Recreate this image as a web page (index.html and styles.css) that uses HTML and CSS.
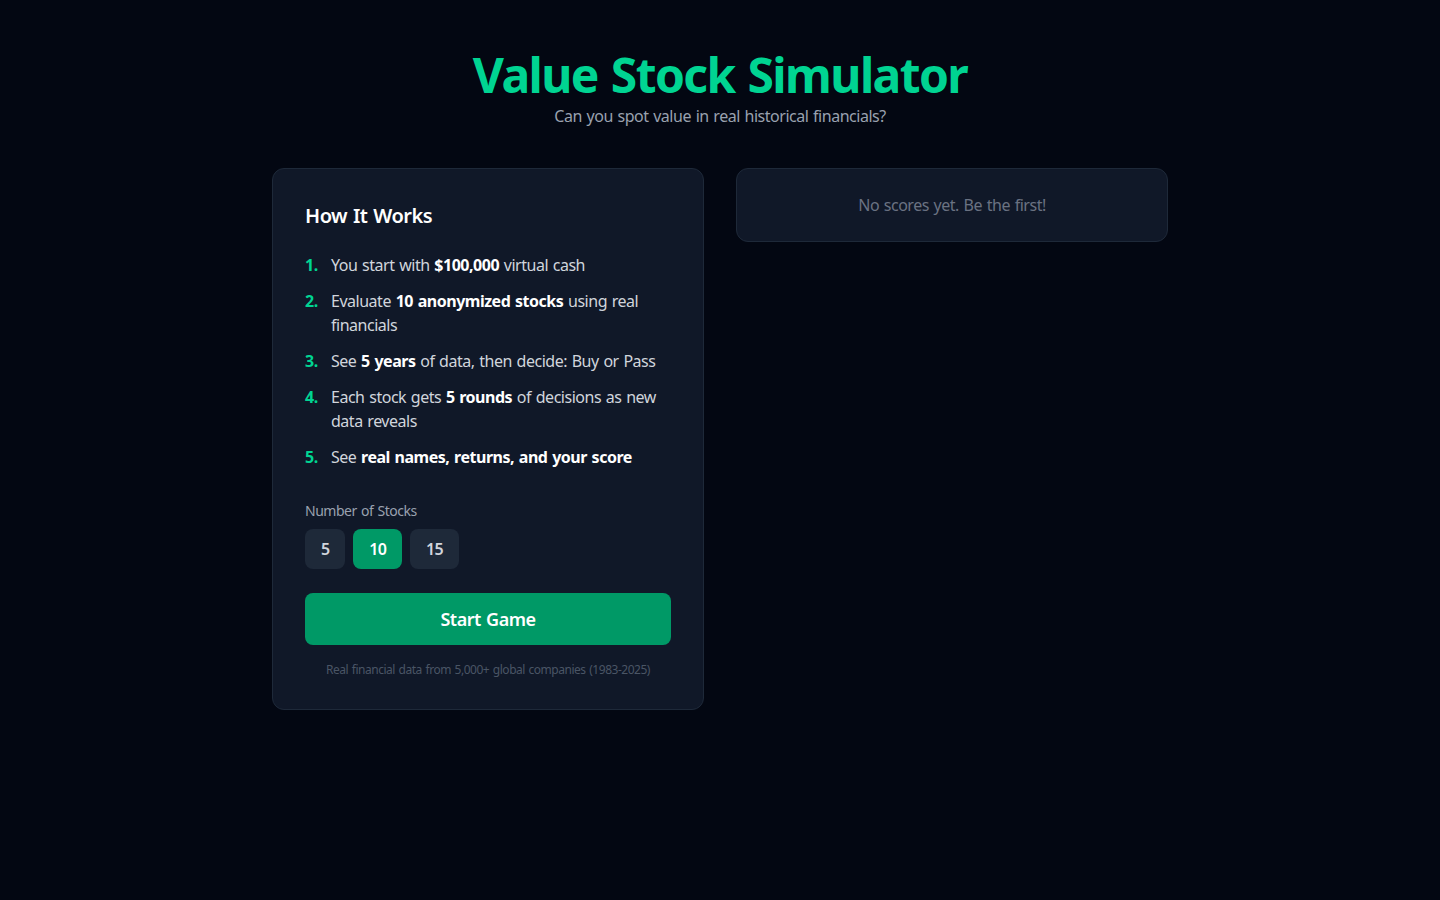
FILE: index.html
```html
<!DOCTYPE html>
<html lang="en">
<head>
<meta charset="utf-8">
<title>Value Stock Simulator</title>
<link rel="stylesheet" href="styles.css">
</head>
<body>
<main class="page">
  <header class="hero">
    <h1 class="title">Value Stock Simulator</h1>
    <p class="subtitle">Can you spot value in real historical financials?</p>
  </header>
  <div class="grid">
    <section class="card card-main">
      <h2 class="card-title">How It Works</h2>
      <ol class="steps">
        <li class="step"><span class="num">1.</span><span class="step-text">You start with <strong>$100,000</strong> virtual cash</span></li>
        <li class="step"><span class="num">2.</span><span class="step-text">Evaluate <strong>10 anonymized stocks</strong> using real financials</span></li>
        <li class="step"><span class="num">3.</span><span class="step-text">See <strong>5 years</strong> of data, then decide: Buy or Pass</span></li>
        <li class="step"><span class="num">4.</span><span class="step-text">Each stock gets <strong>5 rounds</strong> of decisions as new data reveals</span></li>
        <li class="step"><span class="num">5.</span><span class="step-text">See <strong>real names, returns, and your score</strong></span></li>
      </ol>
      <div class="field">
        <div class="label">Number of Stocks</div>
        <div class="options">
          <button class="opt">5</button>
          <button class="opt opt-active">10</button>
          <button class="opt">15</button>
        </div>
      </div>
      <button class="start">Start Game</button>
      <p class="note">Real financial data from 5,000+ global companies (1983-2025)</p>
    </section>
    <section class="card card-side">
      <p class="empty">No scores yet. Be the first!</p>
    </section>
  </div>
</main>
</body>
</html>
```

FILE: styles.css
```css
* { box-sizing: border-box; }
html, body { margin: 0; padding: 0; }
body {
  background: #030712;
  color: #d1d5dc;
  font-family: "Noto Sans", "Open Sans", sans-serif;
  letter-spacing: -0.03em;
  word-spacing: 1px;
  min-height: 100vh;
}
.page {
  max-width: 896px;
  margin: 0 auto;
  padding: 48px 0;
}
.hero { text-align: center; margin-bottom: 40px; }
.title {
  margin: 0;
  padding-top: 3px;
  font-size: 48px;
  line-height: 48px;
  font-weight: 700;
  color: #00d492;
  letter-spacing: -1.6px;
  word-spacing: 2px;
}
.subtitle {
  margin: 5px 0 0;
  font-size: 16px;
  line-height: 24px;
  color: #99a1af;
}
.grid {
  display: grid;
  grid-template-columns: 1fr 1fr;
  gap: 32px;
  align-items: start;
}
.card {
  background: #101828;
  border: 1px solid #1e2939;
  border-radius: 12px;
}
.card-main { padding: 32px; }
.card-side { padding: 24px; }
.card-title {
  margin: 0 0 24px;
  padding-top: 1px;
  font-size: 20px;
  line-height: 27px;
  font-weight: 600;
  color: #ffffff;
}
.steps {
  list-style: none;
  margin: 0 0 32px;
  padding: 0;
  display: flex;
  flex-direction: column;
  gap: 12px;
}
.step {
  display: flex;
  gap: 12px;
  font-size: 16px;
  line-height: 24px;
  color: #d1d5dc;
}
.num {
  flex-shrink: 0;
  width: 14px;
  color: #00d492;
  font-weight: 700;
}
.step-text strong { color: #ffffff; font-weight: 700; }
.label {
  font-size: 14px;
  line-height: 20px;
  color: #99a1af;
  margin-bottom: 8px;
}
.options { display: flex; gap: 8px; margin-bottom: 24px; }
.opt {
  border: 0;
  border-radius: 8px;
  padding: 8px 16px;
  font-family: inherit;
  letter-spacing: -0.05em;
  font-size: 16px;
  line-height: 24px;
  font-weight: 600;
  background: #1e2939;
  color: #d1d5dc;
}
.opt-active { background: #009966; color: #ffffff; }
.start {
  display: block;
  width: 100%;
  border: 0;
  border-radius: 8px;
  padding: 12px 0;
  background: #009966;
  color: #ffffff;
  font-family: inherit;
  letter-spacing: inherit;
  word-spacing: inherit;
  font-size: 18px;
  line-height: 28px;
  font-weight: 600;
}
.note {
  margin: 16px 0 0;
  padding-top: 1px;
  text-align: center;
  font-size: 12px;
  line-height: 15px;
  color: #4a5565;
}
.empty {
  margin: 0;
  text-align: center;
  font-size: 16px;
  line-height: 24px;
  color: #6a7282;
}
```
